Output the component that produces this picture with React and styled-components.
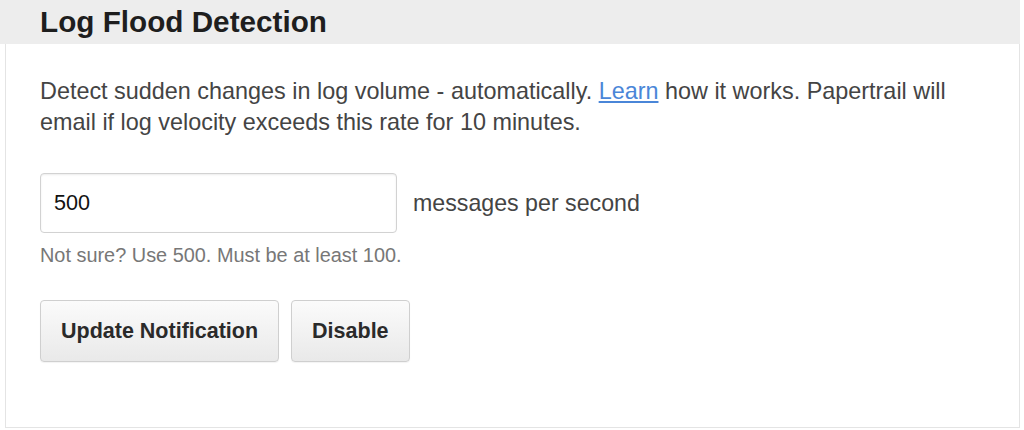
import React, { useState } from 'react';
import styled, { createGlobalStyle } from 'styled-components';

const GlobalStyle = createGlobalStyle`
  body {
    margin: 0;
    background: #fff;
    font-family: "Liberation Sans", Arial, sans-serif;
  }
`;

const Panel = styled.section`
  width: 1020px;
  height: 430px;
  display: flex;
  flex-direction: column;
`;

const Header = styled.h3`
  margin: 0;
  height: 44px;
  line-height: 44px;
  padding: 0 40px;
  background: #ededed;
  font-size: 29.7px;
  font-weight: bold;
  color: #1e1e1e;
`;

const Body = styled.div`
  flex: 1;
  margin-left: 5px;
  padding: 32px 34px 0;
  border: 1px solid #e4e4e4;
  border-top: none;
  margin-bottom: 2px;
`;

const Intro = styled.p`
  margin: 0;
  font-size: 23.4px;
  line-height: 31px;
  color: #444;
  max-width: 930px;
`;

const Link = styled.a`
  color: #4a86d8;
  text-decoration: underline;
`;

const Field = styled.div`
  margin-top: 35px;
  display: flex;
  align-items: center;
  gap: 16px;
`;

const Input = styled.input`
  box-sizing: border-box;
  width: 357px;
  height: 60px;
  padding: 0 13px;
  border: 1px solid #d2d2d2;
  border-radius: 4px;
  box-shadow: inset 0 1px 2px rgba(0, 0, 0, 0.08);
  font-family: inherit;
  font-size: 21.6px;
  color: #111;
  background: #fff;

  &:focus {
    outline: none;
  }
`;

const Unit = styled.span`
  font-size: 23.2px;
  line-height: 31px;
  color: #444;
`;

const Hint = styled.div`
  margin-top: 10px;
  font-size: 19.9px;
  line-height: 24px;
  color: #777;
`;

const Actions = styled.div`
  margin-top: 33px;
  display: flex;
  gap: 12px;
`;

const Button = styled.button`
  box-sizing: border-box;
  height: 62px;
  padding: 0 20px;
  border: 1px solid #cfcfcf;
  border-radius: 4px;
  background: linear-gradient(#fbfbfb, #e9e9e9);
  box-shadow: 0 1px 1px rgba(0, 0, 0, 0.05);
  font-family: inherit;
  font-size: 21.5px;
  font-weight: bold;
  color: #2a2a2a;
  cursor: pointer;
`;

const App = () => {
  const [rate, setRate] = useState('500');

  return (
    <>
      <GlobalStyle />
      <Panel>
        <Header>Log Flood Detection</Header>
        <Body>
          <Intro>
            Detect sudden changes in log volume - automatically.{' '}
            <Link href="#">Learn</Link> how it works. Papertrail will email if
            log velocity exceeds this rate for 10 minutes.
          </Intro>
          <Field>
            <Input
              type="number"
              min={100}
              value={rate}
              onChange={e => setRate(e.target.value)}
            />
            <Unit>messages per second</Unit>
          </Field>
          <Hint>Not sure? Use 500. Must be at least 100.</Hint>
          <Actions>
            <Button>Update Notification</Button>
            <Button>Disable</Button>
          </Actions>
        </Body>
      </Panel>
    </>
  );
};

export default App;
